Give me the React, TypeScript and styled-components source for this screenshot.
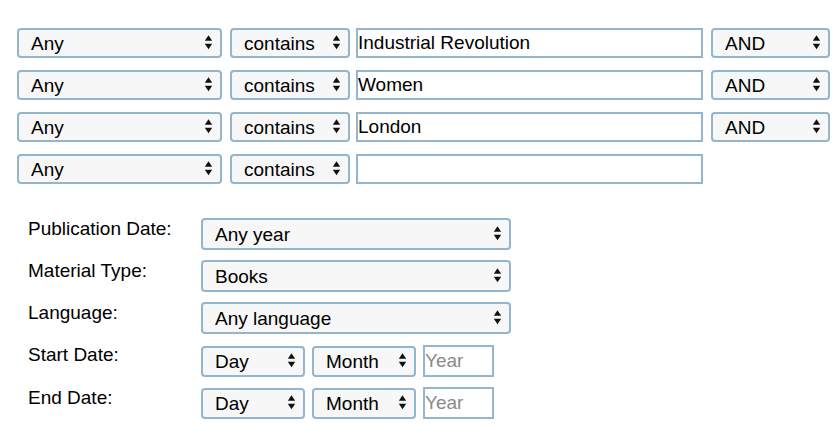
import React from "react";
import styled, { createGlobalStyle } from "styled-components";

const Global = createGlobalStyle`
  html, body { margin: 0; padding: 0; background: #fff; }
  body { font-family: "Liberation Sans", Arial, sans-serif; color: #000; }
  * { box-sizing: border-box; }
`;

const Page = styled.div`
  padding: 28px 0 0 17px;
  width: 840px;
  height: 437px;
`;

const Criteria = styled.div`
  display: flex;
  flex-direction: column;
  gap: 12px;
`;

const Row = styled.div`
  display: flex;
  align-items: center;
  height: 30px;
`;

const SelectWrap = styled.div<{ $w: number; $h?: number; $mr?: number }>`
  position: relative;
  width: ${(p) => p.$w}px;
  height: ${(p) => p.$h ?? 30}px;
  margin-right: ${(p) => p.$mr ?? 0}px;
  flex: none;
`;

const NativeSelect = styled.select`
  appearance: none;
  -webkit-appearance: none;
  width: 100%;
  height: 100%;
  border: 2px solid #93b5cd;
  border-radius: 4px;
  background: #f7f7f7;
  font-family: "Liberation Sans", Arial, sans-serif;
  font-size: 19px;
  color: #000;
  padding: 0 24px 0 12px;
  outline: none;
  margin: 0;
`;

const Arrow = styled.svg`
  position: absolute;
  right: 9px;
  top: 50%;
  transform: translateY(-55%);
  pointer-events: none;
`;

const TextInput = styled.input<{ $w: number; $h?: number; $mr?: number }>`
  width: ${(p) => p.$w}px;
  height: ${(p) => p.$h ?? 30}px;
  margin: 0 ${(p) => p.$mr ?? 0}px 0 0;
  border: 2px solid #93b5cd;
  border-radius: 0;
  background: #fff;
  font-family: "Liberation Sans", Arial, sans-serif;
  font-size: 19px;
  color: #000;
  padding: 0;
  outline: none;
  flex: none;
  &::placeholder { color: #8a8a8a; }
`;

const Filters = styled.div`
  display: grid;
  grid-template-columns: 173px auto;
  margin: 34px 0 0 11px;
  row-gap: 10px;
`;

const Label = styled.div<{ $h: number }>`
  font-size: 19px;
  line-height: 22px;
  height: ${(p) => p.$h}px;
`;

const DateRow = styled.div<{ $mt?: number }>`
  display: flex;
  align-items: center;
  margin-top: ${(p) => p.$mt ?? 0}px;
`;

function Sel({
  w,
  h,
  mr,
  value,
}: {
  w: number;
  h?: number;
  mr?: number;
  value: string;
}) {
  return (
    <SelectWrap $w={w} $h={h} $mr={mr}>
      <NativeSelect defaultValue={value}>
        <option>{value}</option>
      </NativeSelect>
      <Arrow width="9" height="15" viewBox="0 0 9 15">
        <path d="M0.8 6 L4.5 0.5 L8.2 6 Z" fill="#111" />
        <path d="M0.8 9 L4.5 14.5 L8.2 9 Z" fill="#111" />
      </Arrow>
    </SelectWrap>
  );
}

const rows: { term: string; op?: string }[] = [
  { term: "Industrial Revolution", op: "AND" },
  { term: "Women", op: "AND" },
  { term: "London", op: "AND" },
  { term: "" },
];

export default function App() {
  return (
    <>
      <Global />
      <Page>
        <Criteria>
          {rows.map((r, i) => (
            <Row key={i}>
              <Sel w={205} mr={8} value="Any" />
              <Sel w={120} mr={6} value="contains" />
              <TextInput $w={347} $mr={8} defaultValue={r.term} />
              {r.op && <Sel w={119} value={r.op} />}
            </Row>
          ))}
        </Criteria>
        <Filters>
          <Label $h={32}>Publication Date:</Label>
          <Sel w={310} h={32} value="Any year" />
          <Label $h={32}>Material Type:</Label>
          <Sel w={310} h={32} value="Books" />
          <Label $h={32}>Language:</Label>
          <Sel w={310} h={32} value="Any language" />
          <Label $h={33}>Start Date:</Label>
          <DateRow $mt={1}>
            <Sel w={104} h={31} mr={7} value="Day" />
            <Sel w={104} h={31} mr={7} value="Month" />
            <TextInput $w={71} $h={32} placeholder="Year" />
          </DateRow>
          <Label $h={32}>End Date:</Label>
          <DateRow>
            <Sel w={104} h={31} mr={7} value="Day" />
            <Sel w={104} h={31} mr={7} value="Month" />
            <TextInput $w={71} $h={32} placeholder="Year" />
          </DateRow>
        </Filters>
      </Page>
    </>
  );
}
